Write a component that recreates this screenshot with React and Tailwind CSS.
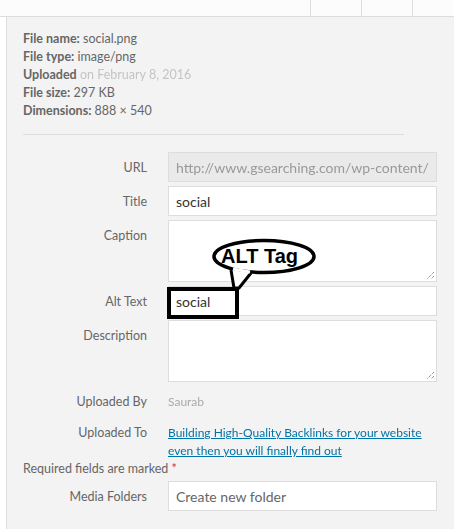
import React from 'react';

const font = { fontFamily: 'Lato, "Open Sans", sans-serif' };

const InfoLine = ({ label, children }) => (
    <div className="leading-[18px]">
        <span className="font-bold">{label}</span> {children}
    </div>
);

const Row = ({ label, children, className = '' }) => (
    <div className={`flex ${className}`}>
        <div className="w-[124px] shrink-0 text-right pt-[7px] leading-[18px] text-[12.5px] text-[#666]">{label}</div>
        <div className="ml-[21px] w-[269px]">{children}</div>
    </div>
);

const Input = ({ value, disabled, className = '', children }) => (
    <div className={`relative h-[30px] border border-[#ddd] px-[7px] flex items-center text-[14px] ${disabled ? 'bg-[#eaeaea]' : 'bg-white'} ${className}`}>
        {value && <span className="text-[#333]">{value}</span>}
        {children}
    </div>
);

const Grip = () => (
    <svg className="absolute right-[1px] bottom-[1px]" width="9" height="9" viewBox="0 0 9 9">
        <path d="M8 1 L1 8 M8 5 L5 8" stroke="#666" strokeWidth="1" strokeDasharray="1 1" />
    </svg>
);

const TextArea = () => (
    <div className="relative h-[62px] border border-[#ddd] bg-white">
        <Grip />
    </div>
);

const AltCallout = () => (
    <>
        <svg className="absolute left-[40px] top-[-50px] pointer-events-none" width="115" height="56" viewBox="0 0 115 56">
            <ellipse cx="56" cy="20.5" rx="50" ry="16" fill="white" stroke="black" strokeWidth="3.5" />
            <path d="M23 34 L26 52 L31 52 L43 37" fill="white" stroke="black" strokeWidth="3" strokeLinejoin="round" />
            <path d="M25 33 L42 36" stroke="white" strokeWidth="3" />
        </svg>
        <span
            className="absolute left-[53px] top-[-41px] text-[20px] leading-[22px] font-bold text-black whitespace-nowrap"
            style={{ fontFamily: '"Liberation Sans", Arial, sans-serif' }}
        >
            ALT Tag
        </span>
        <div className="absolute left-[-1px] top-[1px] w-[72px] h-[32px] border-[4px] border-black pointer-events-none" />
    </>
);

export default function App() {
    return (
        <div className="w-[454px] h-[529px] bg-white overflow-hidden flex flex-col" style={font}>
            <div className="h-[17px] shrink-0 bg-[#fcfcfc] border-b border-[#ddd] flex justify-end shadow-[0_1px_2px_rgba(0,0,0,0.04)]">
                <div className="w-[51px] border-l border-[#ddd]" />
                <div className="w-[51px] border-l border-[#ddd]" />
                <div className="w-[42px] border-l border-[#ddd]" />
            </div>
            <div className="flex flex-1">
                <div className="w-[6px] shrink-0 bg-white" />
                <div className="flex-1 bg-[#f3f3f3] border-l border-[#ddd] pl-[16px] pt-[13px]">
                    <div className="text-[12.5px] text-[#666]">
                        <InfoLine label="File name:">social.png</InfoLine>
                        <InfoLine label="File type:">image/png</InfoLine>
                        <div className="leading-[18px]">
                            <span className="font-bold">Uploaded</span>{' '}
                            <span className="text-[#c4c4c4] blur-[0.7px]">on February 8, 2016</span>
                        </div>
                        <InfoLine label="File size:">297 KB</InfoLine>
                        <InfoLine label="Dimensions:">888 × 540</InfoLine>
                    </div>
                    <div className="w-[381px] border-t border-[#ddd] mt-[14px]" />

                    <div className="mt-[17px] flex flex-col gap-[4px]">
                        <Row label="URL">
                            <Input disabled className="overflow-hidden">
                                <span className="text-[#999] whitespace-nowrap blur-[0.6px]">http://www.gsearching.com/wp-content/</span>
                            </Input>
                        </Row>
                        <Row label="Title">
                            <Input value="social" />
                        </Row>
                        <Row label="Caption">
                            <TextArea />
                        </Row>
                        <Row label="Alt Text">
                            <div className="relative">
                                <Input value="social" />
                                <AltCallout />
                            </div>
                        </Row>
                        <Row label="Description">
                            <TextArea />
                        </Row>
                        <Row label="Uploaded By" className="h-[27px]">
                            <div className="pt-[7px] leading-[18px] text-[12px] text-[#aaa] blur-[0.7px]">Saurab</div>
                        </Row>
                        <Row label="Uploaded To">
                            <a className="block pt-[7px] leading-[18px] text-[12px] text-[#0073aa] underline blur-[0.5px]">
                                Building High-Quality Backlinks for your website even then you will finally find out
                            </a>
                        </Row>
                    </div>
                    <div className="text-[12.5px] leading-[18px] text-[#666]">
                        Required fields are marked <span className="text-[#dc3232]">*</span>
                    </div>
                    <div className="mt-[3px]">
                        <Row label="Media Folders">
                            <Input>
                                <span className="text-[#666]">Create new folder</span>
                            </Input>
                        </Row>
                    </div>
                </div>
            </div>
        </div>
    );
}
